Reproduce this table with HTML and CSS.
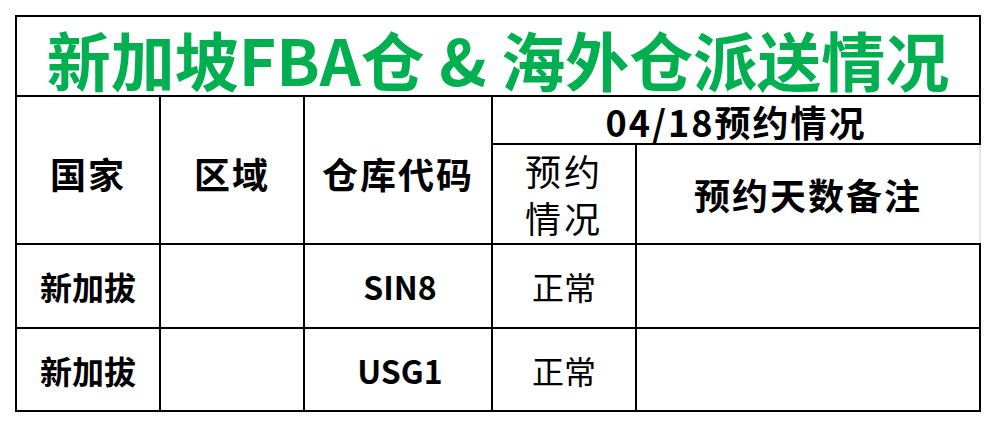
FILE: index.html
```html
<!DOCTYPE html>
<html lang="zh-CN">
<head>
<meta charset="utf-8">
<title>新加坡FBA仓 &amp; 海外仓派送情况</title>
<link rel="stylesheet" href="styles.css">
</head>
<body>
<div class="sheet">
  <div class="cell title">新加坡FBA仓 &amp; 海外仓派送情况</div>
  <div class="cell head tall c1">国家</div>
  <div class="cell head tall c2">区域</div>
  <div class="cell head tall c3">仓库代码</div>
  <div class="cell head date">04/18预约情况</div>
  <div class="cell sub">预约<br>情况</div>
  <div class="cell head note">预约天数备注</div>

  <div class="cell data bold">新加拔</div>
  <div class="cell data"></div>
  <div class="cell data bold code">SIN8</div>
  <div class="cell data">正常</div>
  <div class="cell data"></div>

  <div class="cell data bold">新加拔</div>
  <div class="cell data"></div>
  <div class="cell data bold code">USG1</div>
  <div class="cell data">正常</div>
  <div class="cell data"></div>
</div>
</body>
</html>
```

FILE: styles.css
```css
html, body {
  margin: 0;
  padding: 0;
  background: #ffffff;
}

body {
  font-family: "Noto Sans CJK SC", "Noto Sans", sans-serif;
  color: #000000;
}

.sheet {
  display: grid;
  width: max-content;
  margin: 15px 0 0 15px;
  padding: 2px;
  gap: 2px;
  background: #000000;
  grid-template-columns: 142px 142px 186px 142px 342px;
  grid-template-rows: 78px 46px 98px 82px 81px;
}

.cell {
  background: #ffffff;
  display: flex;
  align-items: center;
  justify-content: center;
  text-align: center;
  white-space: nowrap;
}

.title {
  grid-column: 1 / -1;
  color: #00b050;
  font-weight: 700;
  font-size: 64px;
  line-height: 1;
  padding-top: 4px;
  box-sizing: border-box;
}

.head {
  font-weight: 700;
  font-size: 36px;
  letter-spacing: 2px;
  line-height: 1;
}

.tall {
  grid-row: 2 / 4;
  padding-top: 6px;
  box-sizing: border-box;
}

.c1 { grid-column: 1; }
.c2 { grid-column: 2; }
.c3 { grid-column: 3; }

.date {
  grid-column: 4 / 6;
  grid-row: 2;
  padding-top: 2px;
  box-sizing: border-box;
}

.sub {
  grid-column: 4;
  grid-row: 3;
  font-size: 36px;
  font-weight: 400;
  letter-spacing: 3px;
  line-height: 47px;
}

.note {
  grid-column: 5;
  grid-row: 3;
  margin-right: -2px;
  border-right: 2px solid #e6e6e6;
}

.data {
  font-size: 32px;
  font-weight: 400;
  line-height: 1;
}

.bold {
  font-weight: 700;
}

.code {
  font-size: 32px;
  padding-left: 4px;
  box-sizing: border-box;
}
```
